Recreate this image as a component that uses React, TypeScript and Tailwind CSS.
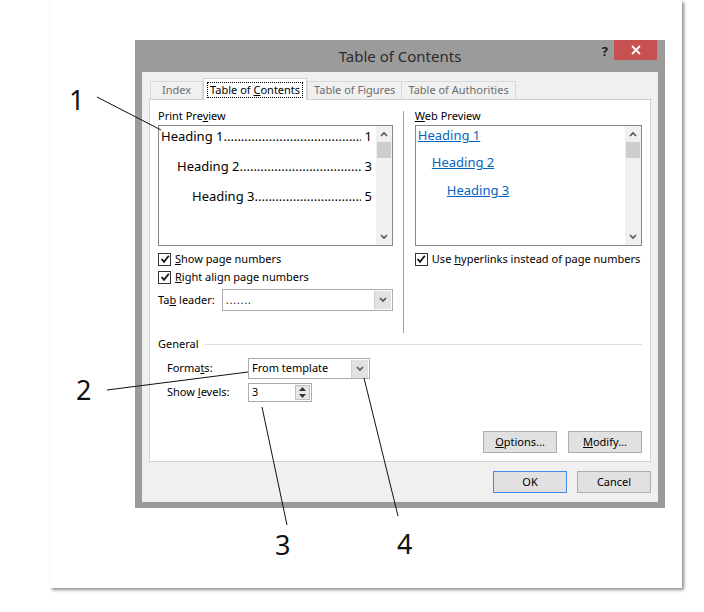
import React from "react";

const F = { fontFamily: '"Noto Sans", "Open Sans", sans-serif' };

const Chk = ({ u, rest, pre = "" }: { u: string; rest: string; pre?: string }) => (
  <div className="flex items-center gap-[4px] h-[18px] text-[11px] text-black whitespace-nowrap">
    <div className="w-[13px] h-[13px] shrink-0 border border-[#333] bg-white flex items-center justify-center">
      <svg width="10" height="10" viewBox="0 0 10 10"><path d="M1.5 5 L4 7.8 L8.8 1.8" fill="none" stroke="#111" strokeWidth="1.8" /></svg>
    </div>
    <span>{pre}<u>{u}</u>{rest}</span>
  </div>
);

const Arrow = ({ up }: { up?: boolean }) => (
  <svg width="8" height="6" viewBox="0 0 8 6"><path d={up ? "M1 5 L4 2 L7 5" : "M1 1 L4 4 L7 1"} fill="none" stroke="#555" strokeWidth="1.6" /></svg>
);

const Scroll = () => (
  <div className="w-[16px] shrink-0 h-full bg-[#f0f0f0] flex flex-col items-center">
    <div className="h-[16px] flex items-center justify-center"><Arrow up /></div>
    <div className="w-[14px] h-[16px] bg-[#cdcdcd]" />
    <div className="flex-1" />
    <div className="h-[16px] flex items-center justify-center"><Arrow /></div>
  </div>
);

const DropBtn = () => (
  <div className="w-[17px] h-[18px] shrink-0 bg-[#e1e1e1] border-l border-[#d0d0d0] flex items-center justify-center"><Arrow /></div>
);

const Btn = ({ children, blue }: { children: React.ReactNode; blue?: boolean }) => (
  <div className={`w-[74px] h-[22px] flex items-center justify-center text-[11px] bg-[#e1e1e1] border ${blue ? "border-[#3c8ce6]" : "border-[#adadad]"}`}>{children}</div>
);

const Line = ({ text, num, indent }: { text: string; num: string; indent: number }) => (
  <div className="flex h-[30px] items-start pt-[1px] text-[13px] pr-[4px] min-w-0" style={{ paddingLeft: indent }}>
    <span className="whitespace-nowrap shrink-0">{text}</span>
    <span className="flex-1 min-w-0 overflow-hidden whitespace-nowrap">{"..............................................................."}</span>
    <span className="pl-[4px] shrink-0">{num}</span>
  </div>
);

export default function App() {
  return (
    <div className="relative w-[704px] h-[612px] bg-white overflow-hidden" style={F}>
      <div className="ml-[50px] w-[632px] h-[588px] bg-white shadow-[2px_2px_3px_rgba(0,0,0,0.45)] pt-[40px]">
        <div className="ml-[85px] w-[530px] h-[468px] bg-[#9b9b9b] px-[7px] pb-[6px] flex flex-col">
          <div className="h-[32px] relative flex items-center justify-center text-[15px] text-[#2b2b2b]">
            Table of Contents
            <span className="absolute right-[50px] top-[2px] text-[13px] font-bold text-[#222]">?</span>
            <div className="absolute right-[1px] top-0 w-[43px] h-[20px] bg-[#c75050] flex items-center justify-center">
              <svg width="10" height="10" viewBox="0 0 10 10"><path d="M1 1 L9 9 M9 1 L1 9" stroke="white" strokeWidth="1.8" /></svg>
            </div>
          </div>
          <div className="flex-1 bg-[#f0f0f0] px-[7px] pt-[6px] flex flex-col text-black">
            <div className="flex items-end h-[21px] pl-[1px] text-[11px]">
              <div className="h-[18px] px-[11px] border border-b-0 border-[#d9d9d9] text-[#6d6d6d] flex items-center">Index</div>
              <div className="h-[22px] px-[3px] mb-[-1px] border border-b-0 border-[#d0d0d0] bg-white flex items-center z-10">
                <span className="border border-dotted border-black px-[2px] leading-[14px]">Table of <u>C</u>ontents</span>
              </div>
              <div className="h-[18px] px-[6px] border border-b-0 border-[#d9d9d9] text-[#6d6d6d] flex items-center">Table of Figures</div>
              <div className="h-[18px] px-[6px] border border-b-0 border-l-0 border-[#d9d9d9] text-[#6d6d6d] flex items-center">Table of Authorities</div>
            </div>
            <div className="h-[363px] bg-white border border-[#d0d0d0] px-[8px] pt-[8px] flex flex-col">
              <div className="flex h-[225px]">
                <div className="w-[235px] flex flex-col">
                  <div className="text-[11px] h-[17px]">Print Pre<u>v</u>iew</div>
                  <div className="h-[121px] border border-[#828790] flex">
                    <div className="flex-1 min-w-0">
                      <Line text="Heading 1" num="1" indent={2} />
                      <Line text="Heading 2 " num="3" indent={18} />
                      <Line text="Heading 3" num="5" indent={33} />
                    </div>
                    <Scroll />
                  </div>
                  <div className="mt-[4px] flex flex-col">
                    <Chk u="S" rest="how page numbers" />
                    <Chk u="R" rest="ight align page numbers" />
                  </div>
                  <div className="flex items-center mt-[3px] text-[11px]">
                    <span className="w-[64px]">Ta<u>b</u> leader:</span>
                    <div className="flex-1 h-[22px] border border-[#adadad] flex items-center justify-between pl-[3px] pr-[1px]">
                      <span className="text-[10px] tracking-[1px]">.......</span>
                      <DropBtn />
                    </div>
                  </div>
                </div>
                <div className="w-[22px] flex justify-center pt-[3px] h-[225px]"><div className="w-px h-full bg-[#a0a0a0]" /></div>
                <div className="w-[229px] flex flex-col">
                  <div className="text-[11px] h-[17px]"><u>W</u>eb Preview</div>
                  <div className="h-[121px] border border-[#828790] flex">
                    <div className="flex-1 min-w-0 pl-[2px] text-[13px] text-[#0563c1] underline">
                      <div className="h-[19px]">Heading 1</div>
                      <div className="h-[28px] pt-[8px] pl-[14px]">Heading 2</div>
                      <div className="h-[28px] pt-[8px] pl-[29px]">Heading 3</div>
                    </div>
                    <Scroll />
                  </div>
                  <div className="mt-[4px]"><Chk u="h" pre="Use " rest="yperlinks instead of page numbers" /></div>
                </div>
              </div>
              <div className="mt-[3px] flex items-center text-[11px] h-[16px]">
                <span>General</span>
                <div className="flex-1 h-px bg-[#dcdcdc] ml-[6px]" />
              </div>
              <div className="pl-[9px] mt-[6px] flex flex-col text-[11px]">
                <div className="flex items-center h-[21px]">
                  <span className="w-[81px]">Forma<u>t</u>s:</span>
                  <div className="w-[122px] h-[21px] border border-[#adadad] flex items-center justify-between pl-[3px] pr-[1px]">
                    <span>From template</span>
                    <DropBtn />
                  </div>
                </div>
                <div className="flex items-center h-[19px] mt-[4px]">
                  <span className="w-[81px]">Show <u>l</u>evels:</span>
                  <div className="w-[64px] h-[19px] border border-[#adadad] flex items-center justify-between pl-[3px] pr-[1px]">
                    <span>3</span>
                    <div className="w-[15px] h-[15px] flex flex-col border border-[#c0c0c0] bg-[#e6e6e6]">
                      <div className="flex-1 flex items-center justify-center"><svg width="7" height="4"><path d="M0 4 L3.5 0 L7 4Z" fill="#333" /></svg></div>
                      <div className="flex-1 flex items-center justify-center"><svg width="7" height="4"><path d="M0 0 L3.5 4 L7 0Z" fill="#333" /></svg></div>
                    </div>
                  </div>
                </div>
              </div>
              <div className="flex-1" />
              <div className="flex justify-end gap-[11px] mb-[8px]">
                <Btn><span><u>O</u>ptions...</span></Btn>
                <Btn><span><u>M</u>odify...</span></Btn>
              </div>
            </div>
            <div className="flex justify-end gap-[10px] mt-[9px]">
              <Btn blue>OK</Btn>
              <Btn>Cancel</Btn>
            </div>
          </div>
        </div>
      </div>
      <svg className="absolute left-0 top-0 pointer-events-none" width="704" height="612">
        <g stroke="#111" strokeWidth="1">
          <line x1="97" y1="97" x2="161" y2="130" />
          <line x1="107" y1="390" x2="248" y2="372" />
          <line x1="262" y1="407" x2="287" y2="525" />
          <line x1="364" y1="378" x2="398" y2="516" />
        </g>
      </svg>
      <div className="absolute left-[69px] top-[80px] text-[27px] text-[#111]">1</div>
      <div className="absolute left-[76px] top-[370px] text-[27px] text-[#111]">2</div>
      <div className="absolute left-[275px] top-[525px] text-[27px] text-[#111]">3</div>
      <div className="absolute left-[397px] top-[524px] text-[27px] text-[#111]">4</div>
    </div>
  );
}
